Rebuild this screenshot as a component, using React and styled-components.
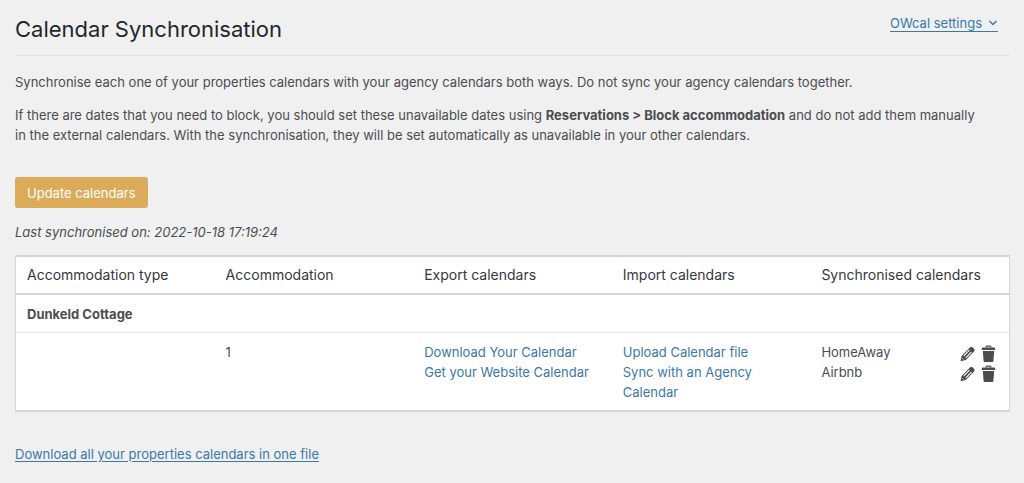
import React from "react";
import styled, { createGlobalStyle } from "styled-components";

const GlobalStyle = createGlobalStyle`
  *, *::before, *::after { box-sizing: border-box; }
  body {
    margin: 0;
    background: #f0f0f0;
    color: #4a4d50;
    font-family: Inter, "Liberation Sans", sans-serif;
    font-size: 13px;
    line-height: 20px;
  }
`;

const Page = styled.main`
  padding: 12px 14px 20px 15px;
`;

const Header = styled.header`
  display: flex;
  justify-content: space-between;
  align-items: flex-start;
  padding: 3px 12px 11px 0;
  border-bottom: 1px solid #dedfe0;
`;

const Title = styled.h1`
  margin: 0;
  color: #23272b;
  font-size: 22px;
  font-weight: 400;
  line-height: 29px;
`;

const Link = styled.a`
  color: #3a78a8;
  text-decoration: ${(p) => (p.$plain ? "none" : "underline")};
  text-underline-offset: 2px;
`;

const MenuLink = styled.a`
  display: flex;
  align-items: center;
  gap: 6px;
  margin-top: 1px;
  border-bottom: 1px solid #3a78a8;
  color: #3a78a8;
  line-height: 15px;
  text-decoration: none;
`;

const Chevron = styled.svg`
  width: 10px;
  height: 10px;
`;

const Intro = styled.section`
  padding: 16px 24px 32px 0;
`;

const Text = styled.p`
  margin: 0 0 13px;

  &:last-child { margin-bottom: 0; }
`;

const Button = styled.button`
  display: block;
  height: 31px;
  padding: 0 12px;
  border: 0;
  border-radius: 3px;
  background: #dbab59;
  color: #fff;
  font: inherit;
  cursor: pointer;
`;

const Status = styled.p`
  margin: 14px 0 13px;
  font-style: italic;
`;

const Table = styled.table`
  width: 100%;
  table-layout: fixed;
  border: solid #d4d5d6;
  border-width: 2px 1px;
  border-collapse: separate;
  border-spacing: 0;
  background: #fff;
`;

const HeadCell = styled.th`
  padding: 8px 0 8px 11px;
  border-bottom: 2px solid #d4d5d6;
  color: #34383c;
  font-size: 14px;
  font-weight: 400;
  text-align: left;
`;

const GroupCell = styled.th`
  padding: 9px 11px 8px;
  border-bottom: 1px solid #e3e4e5;
  font-weight: 700;
  text-align: left;
`;

const Cell = styled.td`
  padding: 9px 13px 8px 11px;
  vertical-align: top;
`;

const List = styled.ul`
  margin: 0;
  padding: 0;
  list-style: none;
`;

const SyncItem = styled.li`
  display: flex;
  justify-content: space-between;
`;

const Actions = styled.span`
  display: flex;
  align-items: flex-end;
  gap: 6px;
`;

const IconButton = styled.button`
  display: block;
  width: 15px;
  height: 18px;
  padding: 0;
  border: 0;
  background: none;
  color: #4c4c4c;
  cursor: pointer;

  svg { display: block; width: 100%; height: 100%; }
`;

const Footer = styled.footer`
  padding-top: 32px;
`;

const PencilIcon = () => (
  <svg viewBox="0 0 15 18" aria-hidden="true">
    <path d="M.6 17.200L1.600 11.900L9.900 3.400Q11.300 2.200 12.700 3.400L14 4.700Q15.200 6 14 7.400L5.800 15.900Z" fill="currentColor" />
    <path d="M3.800 11.900L9.400 6.200M5.800 13.800L11.400 8.100" stroke="#fff" strokeWidth="1.100" />
    <path d="M2.200 14.100L3.700 15.600" stroke="#fff" strokeWidth=".7" />
  </svg>
);

const TrashIcon = () => (
  <svg viewBox="0 0 15 18" aria-hidden="true">
    <path d="M5.200 3.600V2.800q0-.7.700-.7h3.200q.7 0 .7.700v.8" fill="none" stroke="currentColor" strokeWidth="1.200" />
    <path d="M.8 5.900V4.500q0-1.100 1.100-1.100h11.200q1.100 0 1.100 1.100v1.400zM1.800 6.900h11.400l-.8 10q-.1 1-1 1H3.600q-.9 0-1-1z" fill="currentColor" />
  </svg>
);

const columns = [
  "Accommodation type",
  "Accommodation",
  "Export calendars",
  "Import calendars",
  "Synchronised calendars",
];
const exportLinks = ["Download Your Calendar", "Get your Website Calendar"];
const importLinks = ["Upload Calendar file", "Sync with an Agency Calendar"];
const synced = ["HomeAway", "Airbnb"];

const LinkList = ({ items }) => (
  <List>
    {items.map((item) => (
      <li key={item}>
        <Link href="#" $plain>{item}</Link>
      </li>
    ))}
  </List>
);

export default function App() {
  return (
    <>
      <GlobalStyle />
      <Page>
        <Header>
          <Title>Calendar Synchronisation</Title>
          <MenuLink href="#settings">
            OWcal settings
            <Chevron viewBox="0 0 10 10" aria-hidden="true">
              <path d="M1.500 2l3.500 3.500L8.500 2" fill="none" stroke="currentColor" strokeWidth="1.400" />
            </Chevron>
          </MenuLink>
        </Header>
        <Intro>
          <Text>
            Synchronise each one of your properties calendars with your agency calendars both ways. Do not
            sync your agency calendars together.
          </Text>
          <Text>
            If there are dates that you need to block, you should set these unavailable dates using{" "}
            <strong>Reservations &gt; Block accommodation</strong> and do not add them manually in the
            external calendars. With the synchronisation, they will be set automatically as unavailable in
            your other calendars.
          </Text>
        </Intro>
        <Button type="button">Update calendars</Button>
        <Status>Last synchronised on: 2022-10-18 17:19:24</Status>
        <Table>
          <thead>
            <tr>
              {columns.map((name) => (
                <HeadCell key={name} scope="col">{name}</HeadCell>
              ))}
            </tr>
          </thead>
          <tbody>
            <tr>
              <GroupCell colSpan={5} scope="rowgroup">Dunkeld Cottage</GroupCell>
            </tr>
            <tr>
              <Cell />
              <Cell>1</Cell>
              <Cell><LinkList items={exportLinks} /></Cell>
              <Cell><LinkList items={importLinks} /></Cell>
              <Cell>
                <List>
                  {synced.map((name) => (
                    <SyncItem key={name}>
                      {name}
                      <Actions>
                        <IconButton type="button" aria-label={`Edit ${name}`}><PencilIcon /></IconButton>
                        <IconButton type="button" aria-label={`Delete ${name}`}><TrashIcon /></IconButton>
                      </Actions>
                    </SyncItem>
                  ))}
                </List>
              </Cell>
            </tr>
          </tbody>
        </Table>
        <Footer>
          <Link href="#download-all">Download all your properties calendars in one file</Link>
        </Footer>
      </Page>
    </>
  );
}
